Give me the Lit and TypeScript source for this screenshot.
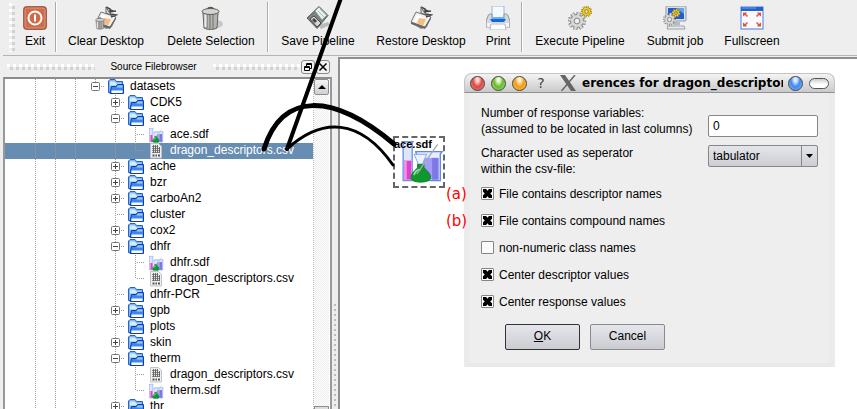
import { LitElement, html, svg, css } from "lit";
import { customElement, state } from "lit/decorators.js";

type Row = { cells: string; icon: "folder" | "sdf" | "csv"; name: string; selected?: boolean };

/* cells: | guide line, t tee, l corner, + collapsed, - expanded, e last expanded */
const ROWS: Row[] = [
  { cells: "|||e", icon: "folder", name: "datasets" },
  { cells: "||| +", icon: "folder", name: "CDK5" },
  { cells: "||| -", icon: "folder", name: "ace" },
  { cells: "||| |t", icon: "sdf", name: "ace.sdf" },
  { cells: "||| |l", icon: "csv", name: "dragon_descriptors.csv", selected: true },
  { cells: "||| +", icon: "folder", name: "ache" },
  { cells: "||| +", icon: "folder", name: "bzr" },
  { cells: "||| +", icon: "folder", name: "carboAn2" },
  { cells: "||| t", icon: "folder", name: "cluster" },
  { cells: "||| +", icon: "folder", name: "cox2" },
  { cells: "||| -", icon: "folder", name: "dhfr" },
  { cells: "||| |t", icon: "sdf", name: "dhfr.sdf" },
  { cells: "||| |l", icon: "csv", name: "dragon_descriptors.csv" },
  { cells: "||| t", icon: "folder", name: "dhfr-PCR" },
  { cells: "||| +", icon: "folder", name: "gpb" },
  { cells: "||| t", icon: "folder", name: "plots" },
  { cells: "||| +", icon: "folder", name: "skin" },
  { cells: "||| -", icon: "folder", name: "therm" },
  { cells: "||| |t", icon: "csv", name: "dragon_descriptors.csv" },
  { cells: "||| |l", icon: "sdf", name: "therm.sdf" },
  { cells: "||| +", icon: "folder", name: "thr" },
];

const cell = (c: string) => {
  const v = (a: number, b: number) => svg`<path d="M10.5 ${a}V${b}" stroke="#999" stroke-dasharray="1 1"/>`;
  const h = (a: number) => svg`<path d="M${a} 7.5H20" stroke="#999" stroke-dasharray="1 1"/>`;
  const box = svg`<rect x="6.500" y="3.500" width="8" height="8" rx="1" fill="#fff" stroke="#777"/><path d="M8 7.500h5" stroke="#444"/>`;
  return html`<svg class="cell" width="20" height="16" viewBox="0 0 20 16" fill="none" aria-hidden="true">${
    c === "|" ? v(0, 16)
    : c === "t" ? svg`${v(0, 16)}${h(12)}`
    : c === "l" ? svg`${v(0, 8)}${h(12)}`
    : c === "e" ? svg`${v(0, 4)}${h(16)}${box}`
    : c === "+" ? svg`${v(0, 16)}${h(16)}${box}<path d="M10.500 5v5" stroke="#444"/>`
    : c === "-" ? svg`${v(0, 16)}${h(16)}${box}`
    : ""
  }</svg>`;
};

const beakers = svg`
  <path d="M3 2h14M5 2v43h10V2" fill="#dfe6fc" stroke="#6f92e6" stroke-width="1.500"/>
  <path d="M6 23h8v21H6z" fill="#e040cc"/><path d="M6 23h3v21H6z" fill="#f590e6"/>
  <path d="M19 13h29l-2 3v29H26z" fill="#e6ebfd" stroke="#5f86e2" stroke-width="1.500"/>
  <path d="M25 20h19v24H25z" fill="#a49cf6"/><path d="M37 20h7v24h-7z" fill="#7d78e6"/>
  <path d="M17 16h14l-4 9v5h-6v-5z" fill="#eaf3fd" stroke="#7fa3e0"/>
  <path d="M21 27h7v4c5 4 8 8 7 12-2 5-20 5-21 0-1-4 2-8 7-12z" fill="#10982f" stroke="#0a7a28"/>
  <path d="M17 39c1-4 4-6 7-6" stroke="#8be894" stroke-width="2" fill="none"/>
  <path d="M43 5L20 38" stroke="#a4a9b5" stroke-width="1.500"/>`;

const ROW_ICONS = {
  folder: html`<svg width="16" height="16" viewBox="0 0 16 16" aria-hidden="true">
    <path d="M.5 13.500V2L2 .5h5l1.500 2h6v11z" fill="#7db8f8" stroke="#2a62c8"/>
    <path d="M2 2.500h5l1 2h5v2H2z" fill="#d7edff"/>
    <path d="M2 14.500L3.500 7.500H8l1.500-2h6v9z" fill="#3d86ee" stroke="#123fa8"/>
    <path d="M4.500 8.500H8.500l1.500-2h4.500v2z" fill="#9ccbfb"/>
    <path d="M3.500 11.500h11v2.500h-11z" fill="#fff"/></svg>`,
  sdf: html`<svg width="16" height="16" viewBox="0 -2 50 50" aria-hidden="true">${beakers}</svg>`,
  csv: html`<svg width="16" height="16" viewBox="0 0 16 16" aria-hidden="true">
    <path d="M2.500 .5h8l3 3v11.500h-11z" fill="#eeeeee" stroke="#c0c4ca"/>
    <path d="M4 3.500h6M4 5.500h8M4 7.500h8M4 9.500h8" stroke="#888"/>
    <path d="M5.500 2v8M7.500 2v8M9.500 2v8M11.500 4v6" stroke="#666"/>
    <path d="M4.500 12.500h2M7.500 12.500h1.500M10 12.500h2" stroke="#555" stroke-width="2"/></svg>`,
};

const brush = svg`
  <path d="M2 17l4-9 16 3-4 10-6 2z" fill="#8a8a86"/>
  <path d="M2 16L7 6l15 5-6 10z" fill="#f2f1ec" stroke="#777"/>
  <path d="M8 9l8 3-3 6-8-3z" fill="#fff"/><path d="M10 12l7 1-3 7-6-3z" fill="#f6bb83"/>
  <path d="M2 16l14 5 6-10v2l-6 10L2 18z" fill="#666"/>
  <path d="M12 1l4 2v5M14 6l8-1M16 8l6 1-5 2M14 2l6 4" stroke="#444" stroke-width="1.500" fill="none"/>
  <path d="M12 1l5 8-5-2z" fill="#d8d8d8" stroke="#666"/>`;

const bin = svg`
  <path d="M4 7h15l-1 15c-3 2-10 2-13 0z" fill="#b4b4b0" stroke="#666"/>
  <path d="M8 8v14M11 8v15M14 8v15" stroke="#6f6f6c"/><path d="M6.500 8v13" stroke="#eee" stroke-width="2"/>
  <ellipse cx="11.500" cy="5.500" rx="8.500" ry="3" fill="#d4d4d0" stroke="#5a5a58"/>
  <path d="M9 3c0-2 5-2 5 0" fill="none" stroke="#555" stroke-width="1.500"/>`;

const gear = (x: number, y: number, r: number, fill: string, line: string) => {
  const teeth = [0, 45, 90, 135].map((a) => svg`<path d="M${x - r} ${y}H${x + r}" transform="rotate(${a + 12} ${x} ${y})"/>`);
  return svg`
    <g stroke=${line} stroke-width=${r * 0.48}>${teeth}</g>
    <circle cx=${x} cy=${y} r=${r * 0.76} fill=${line}/>
    <g stroke=${fill} stroke-width=${r * 0.26}>${teeth}</g>
    <circle cx=${x} cy=${y} r=${r * 0.66} fill=${fill}/>
    <circle cx=${x} cy=${y} r=${r * 0.32} fill="#eee" stroke=${line}/>`;
};

const TOOL_ICONS: Record<string, unknown> = {
  exit: svg`<rect x=".5" y=".5" width="23" height="23" rx="3" fill="#a8533b" stroke="#a0624f"/>
    <rect x="2" y="2" width="20" height="20" rx="2" fill="#cf6b48" stroke="#e39a80"/>
    <circle cx="12" cy="12" r="6.500" fill="none" stroke="#fff" stroke-width="2"/>
    <path d="M12 8.500v7" stroke="#fff" stroke-width="2"/>`,
  clear: svg`${brush}<g transform="translate(0 11) scale(.52)">${bin}</g>`,
  delete: svg`<ellipse cx="17" cy="18" rx="7" ry="4" fill="#c8c8c8"/>${bin}`,
  save: svg`<path d="M12 19l10-3 2 3-9 4z" fill="#bbb"/>
    <path d="M1 12L13 .5l9 9-11 13z" fill="#7d8281" stroke="#5a5e5d"/>
    <path d="M9 5l4-4 8 8-5 5z" fill="#e3f1f1" stroke="#8b9b9b"/><path d="M12 5l6 6M14 3l6 6" stroke="#a8bcbc"/>
    <path d="M4 13l4-3 7 7-4 4z" fill="#d6d6d4" stroke="#4a4a4a"/><path d="M6 14l2-2 3 3-2 2z" fill="#444"/>`,
  restore: brush,
  print: svg`<path d="M6 0h12v13H6z" fill="#f4f8ff" stroke="#9fb4d4"/>
    <path d="M2 10c0-2 3-2 4-2v5h12V8c2 0 4 0 4 2l2 5v6H0v-6z" fill="#d5d8dd" stroke="#8f949c"/>
    <path d="M4 13h16l-2 3H6z" fill="#1666dc"/><path d="M6 11h12v2H6z" fill="#69b2ff"/>
    <path d="M1 17h22v4H1z" fill="#f2f3f5"/><path d="M5 18h14l1 6H4z" fill="#fff" stroke="#b4b8be"/>`,
  execute: svg`${gear(9, 15, 9, "#d8d8d6", "#858585")}${gear(18.5, 5.5, 5.5, "#edcb2e", "#8f7613")}`,
  submit: svg`<rect x="3" y="0" width="20" height="15" rx="1" fill="#dadfe6" stroke="#9099a5"/>
    <rect x="5" y="2" width="16" height="11" fill="#1e5ed0"/><path d="M13 2h8v6z" fill="#5fa0f0"/>
    <path d="M9 16h8v3H9z" fill="#b8bcc2"/><path d="M5 20h16l1 3H4z" fill="#e8eaee" stroke="#9ba0a8"/>
    ${gear(6.5, 13.5, 6.5, "#d8d8d6", "#858585")}${gear(13, 7, 4.2, "#edcb2e", "#8f7613")}`,
  full: svg`<rect x="1" y="1" width="22" height="22" fill="#f8faff" stroke="#4a7fd8"/>
    <path d="M1 1h22v4H1z" fill="#1f62d2"/><path d="M2 2h14" stroke="#6da2f2"/>
    <path d="M3 6.500h4L6 8l2 2-1 1-2-2-2 1.500zM21 6.500h-4l1 1.500-2 2 1 1 2-2 2 1.500zM3 20.500h4L6 19l2-2-1-1-2 2-2-1.500zM21 20.500h-4l1-1.500-2-2 1-1 2 2 2-1.500z" fill="#e8502e"/>`,
};

const TOOLS: (null | [string, string])[] = [
  ["exit", "Exit"], null,
  ["clear", "Clear Desktop"], ["delete", "Delete Selection"], null,
  ["save", "Save Pipeline"], ["restore", "Restore Desktop"], ["print", "Print"], null,
  ["execute", "Execute Pipeline"], ["submit", "Submit job"], ["full", "Fullscreen"],
];

@customElement("tool-bar")
class ToolBar extends LitElement {
  static styles = css`
    :host { display: block; border-bottom: 1px solid #b4b4b4; }
    .bar {
      display: grid; height: 55px; box-sizing: border-box; padding: 2px 0 3px 6px; overflow: hidden;
      grid-template-columns: 6px 40px 2px 98px 112px 2px 98px 108px 46px 2px 114px 76px 78px;
    }
    .grip {
      margin-top: 1px;
      background:
        linear-gradient(135deg, #fff 50%, #c8c8c8 50%) 0 0 / 6px 6px no-repeat,
        conic-gradient(#eee 25%, #d2d2d2 0 50%, #eee 0 75%, #fff 0) 0 0 / 6px 6px;
      background: conic-gradient(#eee 25%, #d2d2d2 0 50%, #eee 0 75%, #fff 0) 0 0 / 6px 6px;
    }
    .sep { border-left: 1px solid #aaa; border-right: 1px solid #fff; box-sizing: border-box; }
    button {
      display: flex; flex-direction: column; align-items: center; gap: 3px; padding: 4px 0 0;
      border: 0; background: none; color: #000; white-space: nowrap;
      font: 12px/16px "Liberation Sans", sans-serif;
    }
  `;
  render() {
    return html`<nav class="bar" aria-label="Tools"><span class="grip"></span>${TOOLS.map((t) =>
      t ? html`<button type="button"><svg width="24" height="24" viewBox="0 0 24 24">${TOOL_ICONS[t[0]]}</svg>${t[1]}</button>`
        : html`<span class="sep"></span>`)}</nav>`;
  }
}

@customElement("file-browser")
class FileBrowser extends LitElement {
  static styles = css`
    :host { display: flex; flex-direction: column; min-height: 0; font: 12px/16px "Liberation Sans", sans-serif; }
    .head { display: flex; align-items: center; height: 21px; padding: 0 2px 0 4px; flex: none; }
    .grip {
      flex: 1; height: 6px;
      background: conic-gradient(#eee 25%, #d2d2d2 0 50%, #eee 0 75%, #fff 0) 0 0 / 6px 6px;
    }
    h2 { flex: none; width: 118px; margin: 0; text-align: center; font: 11px/16px "Liberation Sans", sans-serif; font-size: 10px; }
    .head button {
      flex: none; width: 14px; height: 14px; margin-left: 1px; padding: 0; display: grid; place-items: center;
      border: 1px solid #8a8a8a; border-radius: 3px; background: #f2f2f2;
    }
    .frame { flex: 1; min-height: 0; display: flex; border: 2px solid #999; border-top-color: #8c8c8c; border-bottom: 0; background: #fff; overflow: hidden; }
    ul { flex: 1; min-width: 0; margin: 0; padding: 0; list-style: none; overflow: hidden; }
    .row { display: flex; height: 16px; padding-left: 20px; white-space: nowrap; }
    .row.selected { background: #678db2; color: #fff; }
    .icon { display: flex; width: 16px; margin: 0 6px 0 3px; }
    .cell { flex: none; }
    .name { line-height: 15px; }
    .scroll { flex: none; width: 16px; display: flex; flex-direction: column; margin-right: 1px; border-left: 1px dotted #bbb; box-sizing: border-box; }
    .scroll button { height: 16px; padding: 0; border: 1px solid #8e8e8e; border-radius: 2px; background: linear-gradient(#f4f4f6, #cfcfd4); display: grid; place-items: center; }
    .track { flex: 1; background: repeating-conic-gradient(#ececec 0 25%, #fff 0 50%) 0 0 / 2px 2px; }
    .thumb { height: 3px; border: 1px solid #8e8e8e; border-bottom: 0; box-sizing: border-box; background: #ddd; }
  `;
  render() {
    return html`
      <header class="head">
        <span class="grip"></span><h2>Source Filebrowser</h2><span class="grip"></span>
        <button type="button" aria-label="Float"><svg width="10" height="10" viewBox="0 0 10 10" fill="#f2f2f2" stroke="#000"><path d="M3.500 1.500h5v5h-5zM3 2.500h6"/><path d="M1.500 4.500h5v4h-5zM1 5.500h6"/></svg></button>
        <button type="button" aria-label="Close"><svg width="10" height="10" viewBox="0 0 10 10"><path d="M1.500 1.500l7 7M8.500 1.500l-7 7" stroke="#000" stroke-width="1.500"/></svg></button>
      </header>
      <div class="frame">
        <ul role="tree" aria-label="Source Filebrowser">${ROWS.map((r) => html`
          <li role="treeitem" class="row ${r.selected ? "selected" : ""}">${[...r.cells].map(cell)}<span class="icon">${ROW_ICONS[r.icon]}</span><span class="name">${r.name}</span></li>`)}
        </ul>
        <div class="scroll">
          <button type="button" aria-label="Scroll up"><svg width="8" height="4" viewBox="0 0 8 4"><path d="M4 0l4 4H0z"/></svg></button>
          <div class="track"></div><div class="thumb"></div>
        </div>
      </div>`;
  }
}

@customElement("preferences-dialog")
class PreferencesDialog extends LitElement {
  @state() options = [
    { label: "File contains descriptor names", on: true },
    { label: "File contains compound names", on: true },
    { label: "non-numeric class names", on: false },
    { label: "Center descriptor values", on: true },
    { label: "Center response values", on: true },
  ];
  static styles = css`
    :host { display: block; font: 12px/16px "Liberation Sans", sans-serif; color: #000; }
    .title {
      display: flex; align-items: center; height: 20px; box-sizing: border-box; padding: 0 5px;
      border: 1px solid #c4c4c4; border-bottom-color: #909090; border-radius: 8px 8px 0 0;
      background: linear-gradient(#f4f4f4, #c9c9cb);
    }
    .dot { flex: none; width: 15px; height: 15px; margin-right: 6px; padding: 0; border: 1px solid #444; border-radius: 50%; }
    .red { background: radial-gradient(ellipse at 50% 20%, #ffd0cc 0 15%, #d9463f 50%, #f79a90); }
    .green { background: radial-gradient(ellipse at 50% 20%, #e8ffd0 0 15%, #66b82c 50%, #b9ee80); }
    .amber { background: radial-gradient(ellipse at 50% 20%, #fff0c8 0 15%, #f29a12 50%, #ffd867); }
    .blue { background: radial-gradient(ellipse at 50% 20%, #d8ecff 0 15%, #3f86ee 50%, #9cccff); }
    .help { flex: none; width: 16px; padding: 0; border: 0; background: none; color: #444; font: 14px/18px "DejaVu Sans", sans-serif; }
    .logo { flex: none; margin: 0 5px 0 11px; }
    h1 { flex: 1; min-width: 0; margin: 0 5px 0 0; overflow: hidden; white-space: nowrap; font: bold 12px/18px "DejaVu Sans", sans-serif; }
    .pill { flex: none; width: 20px; height: 11px; padding: 0; border: 1px solid #555; border-radius: 6px; background: linear-gradient(#ccc, #fff 60%); }
    .body {
      padding: 12px 11px 13px; background: #eee;
      border-inline: 6px solid #ebebeb; border-bottom: 4px solid #e9e9e9;
    }
    .field { display: grid; grid-template-columns: 1fr 110px; align-items: end; height: 32px; margin-bottom: 8px; }
    .field.choice { align-items: start; margin-bottom: 3px; }
    input.text, select {
      width: 100%; height: 22px; box-sizing: border-box; padding: 0 4px; border: 1px solid #868686; border-radius: 2px;
      background: #fff; color: #000; font: 12px/16px "Liberation Sans", sans-serif; appearance: none; display: block; outline: 0;
    }
    input.text { margin-bottom: 0; }
    select { background: linear-gradient(#e4e5ea, #cdced4); }
    .box { display: grid; height: 22px; }
    .box > * { grid-area: 1 / 1; }
    .arrow { justify-self: end; pointer-events: none; }
    .check { display: flex; align-items: center; gap: 5px; height: 27px; }
    .check input {
      appearance: none; width: 13px; height: 13px; box-sizing: border-box; margin: 0; border: 1px solid #868686; border-radius: 1px;
      background: #fafafa; display: grid; place-items: center;
    }
    .check input:checked::before {
      content: ""; width: 9px; height: 9px; background: #000;
      clip-path: polygon(0 0, 35% 0, 50% 20%, 65% 0, 100% 0, 100% 30%, 80% 50%, 100% 70%, 100% 100%, 65% 100%, 50% 80%, 35% 100%, 0 100%, 0 70%, 20% 50%, 0 30%);
    }
    .actions { display: flex; gap: 10px; padding: 9px 0 0 24px; }
    .actions button {
      width: 75px; height: 26px; padding: 0 0 2px; border: 1px solid #8a8a8a; border-radius: 2px; color: #000;
      background: linear-gradient(#e6e7ec, #cbccd2); font: 12px/16px "Liberation Sans", sans-serif;
    }
    .actions .ok { border-color: #333; }
  `;
  render() {
    return html`
      <header class="title">
        <button class="dot red" aria-label="Close"></button><button class="dot green" aria-label="Minimize"></button><button class="dot amber" aria-label="Zoom"></button>
        <button class="help">?</button>
        <svg class="logo" width="17" height="16" viewBox="0 0 17 16"><path d="M0 0h5l11 16h-5z" fill="#666"/><path d="M15 0L1.500 16" stroke="#666" stroke-width="1.500"/></svg>
        <h1>erences for dragon_descriptor</h1>
        <button class="dot blue" aria-label="Shade"></button><button class="pill" aria-label="Menu"></button>
      </header>
      <form class="body" @submit=${(e: Event) => e.preventDefault()}>
        <div class="field"><label for="count">Number of response variables:<br />(assumed to be located in last columns)</label>
          <input class="text" id="count" value="0" /></div>
        <div class="field choice"><label for="sepchar">Character used as seperator<br />within the csv-file:</label>
          <span class="box"><select id="sepchar"><option>tabulator</option></select>
          <svg class="arrow" width="17" height="22" viewBox="0 0 17 22"><path d="M.5 1v20" stroke="#868686"/><path d="M5 9h7l-3.500 4z"/></svg></span></div>
        ${this.options.map((o) => html`<label class="check"><input type="checkbox" .checked=${o.on} />${o.label}</label>`)}
        <div class="actions"><button class="ok" type="submit"><u>O</u>K</button><button type="button">Cancel</button></div>
      </form>`;
  }
}

@customElement("app-root")
class AppRoot extends LitElement {
  static styles = css`
    :host {
      display: flex; flex-direction: column; position: relative; height: 100vh; overflow: hidden; box-sizing: border-box;
      padding-left: 3px; background: #eee; color: #000;
    }
    tool-bar { flex: none; }
    main { flex: 1; min-height: 0; display: grid; grid-template-columns: 329px 6px 1fr; }
    .splitter { background: radial-gradient(circle at 2px 2px, #bbb 1px, transparent 1px) 1px 0 / 6px 5px repeat-y; margin-top: 247px; }
    .canvas { position: relative; margin-top: 1px; border: solid #8f8f8f; border-width: 2px 0 0 2px; background: #fff; overflow: hidden; }
    .node { position: absolute; left: 53px; top: 77px; width: 52px; height: 52px; box-sizing: border-box; border: 2px dashed #666; }
    .node svg { display: block; }
    .node span { position: absolute; left: -1px; top: -1px; font: bold 11px/14px "Liberation Sans", sans-serif; }
    .mark { position: absolute; left: 106px; color: #f00; font: 15px/18px "DejaVu Sans", sans-serif; }
    .a { top: 126px; }
    .b { top: 153px; }
    preferences-dialog { position: absolute; left: 124px; top: 14px; width: 371px; }
    .wires { position: absolute; left: 0; top: 0; pointer-events: none; }
  `;
  render() {
    return html`
      <tool-bar></tool-bar>
      <main>
        <file-browser></file-browser>
        <div class="splitter"></div>
        <section class="canvas">
          <div class="node"><svg width="48" height="48" viewBox="-4 -2 53 53">${beakers}</svg><span>ace.sdf</span></div>
          <preferences-dialog></preferences-dialog>
          <span class="mark a">(a)</span><span class="mark b">(b)</span>
        </section>
      </main>
      <svg class="wires" width="450" height="200" viewBox="0 0 450 200" fill="none" stroke="#000" stroke-linecap="round" aria-hidden="true">
        <path d="M341 -2L287 149" stroke-width="4"/>
        <path d="M264 149C282 92 332 92 394 144" stroke-width="5"/>
        <path d="M287 149C322 117 360 118 393 165" stroke-width="3"/>
      </svg>`;
  }
}
